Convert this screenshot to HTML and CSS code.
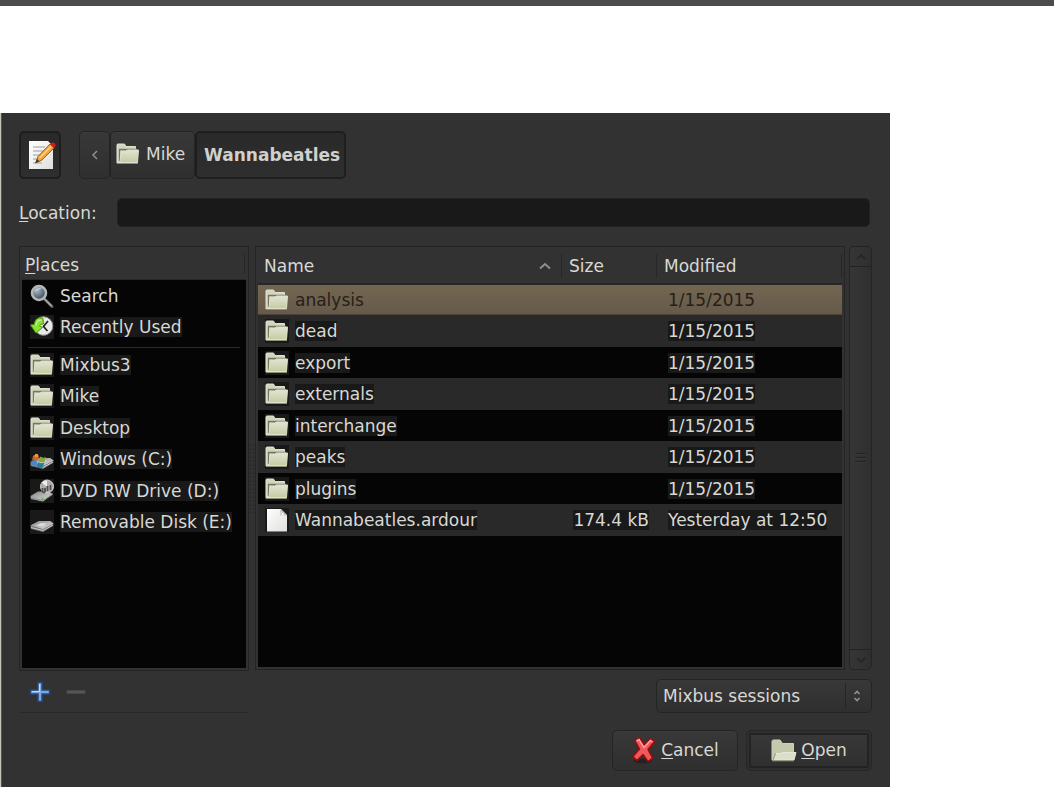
FILE: index.html
```html
<!DOCTYPE html>
<html lang="en">
<head>
    <meta charset="UTF-8">
    <meta name="viewport" content="width=device-width, initial-scale=1.0">
    <title>Open Session</title>
    <link rel="stylesheet" href="styles.css">
</head>
<body>
<!-- Shared icons -->
<svg class="sprite" width="0" height="0" aria-hidden="true">
    <defs>
        <linearGradient id="folder-front" x1="0" y1="0" x2="0" y2="1">
            <stop offset="0" stop-color="#e2e4d3"/>
            <stop offset="1" stop-color="#c6cba3"/>
        </linearGradient>
        <linearGradient id="paper" x1="0" y1="0" x2="1" y2="1">
            <stop offset="0" stop-color="#ffffff"/>
            <stop offset="1" stop-color="#dededc"/>
        </linearGradient>
        <linearGradient id="drive-top" x1="0" y1="0" x2="1" y2="1">
            <stop offset="0" stop-color="#858585"/>
            <stop offset="1" stop-color="#e4e4e4"/>
        </linearGradient>
        <radialGradient id="glass" cx="0.35" cy="0.3" r="0.8">
            <stop offset="0" stop-color="#a9bac8"/>
            <stop offset="1" stop-color="#2c3a48"/>
        </radialGradient>
    </defs>
    <symbol id="icon-folder" viewBox="0 0 24 24">
        <path d="M1 21V3Q1 2 2 2H8.500L10 4.500H19.500V8H5L3.500 21Z" fill="#d3d6be" stroke="#dfe1cf" stroke-width="1"/>
        <path d="M3.600 19V7.500H21" fill="none" stroke="#74765f" stroke-width="1.500"/>
        <path d="M5 9H10L11.500 8H22.500L21.500 20.500H4Z" fill="url(#folder-front)" stroke="#dfe1cf" stroke-width="1"/>
        <path d="M1 21.500H22" stroke="#8d9075"/>
    </symbol>
    <symbol id="icon-folder-open" viewBox="0 0 26 24">
        <path d="M1 22V3.500Q1 2 2.500 2H9L11.500 5.500H22.500V22Z" fill="#c5c9ac" stroke="#cfd2ba"/>
        <path d="M2 22L5 15.500H10L11.500 14.500H25L23 22Z" fill="#dcdecb" stroke="#e6e8d9"/>
        <path d="M2 22L4.500 15.500M1 22.800H23" fill="none" stroke="#8d9075"/>
    </symbol>
    <symbol id="icon-file" viewBox="0 0 24 24">
        <path d="M2 1H16L22 7V23.500H2Z" fill="url(#paper)"/>
        <path d="M15.500 1V7.500H22Z" fill="#b4b4b2"/>
        <path d="M16.500 3.500L20 7.500H16.500Z" fill="#f5f5f5"/>
    </symbol>
    <symbol id="icon-search" viewBox="0 0 24 24">
        <path d="M14.500 15L22 22.500" stroke="#666" stroke-width="3" stroke-linecap="round"/>
        <path d="M14.500 15L21.500 22" stroke="#b0b0b0" stroke-width="1.200"/>
        <circle cx="9" cy="9" r="7" fill="url(#glass)" stroke="#b4b6b8" stroke-width="2.600"/>
        <path d="M4.500 8A5 5 0 0 1 12 4.800Q8 5 4.500 8Z" fill="#dfe6ec" opacity=".6"/>
    </symbol>
    <symbol id="icon-recent" viewBox="0 0 24 24">
        <circle cx="13.500" cy="11" r="9.300" fill="#e9e9e7" stroke="#8a8a88"/>
        <path d="M18 6L13.500 11.500L17.500 16" fill="none" stroke="#222" stroke-width="1.700"/>
        <path d="M13 3.500Q5 1 4.500 9.500L0.500 10L6 18L12.500 12.500L9.500 11Q10 8.500 13.500 9Z" fill="#8ae234" stroke="#4e9a06"/>
        <path d="M6 10.500Q6 5 11.500 4.800" fill="none" stroke="#c4f58d" stroke-width="1.300"/>
    </symbol>
    <symbol id="icon-drive" viewBox="0 0 24 24">
        <path d="M0.500 15.500L9 11H20L23.500 13.500L23 16L13 22L1 19Z" fill="#777"/>
        <path d="M0.500 15.500L9 11H20L23.500 13.500L13 19Z" fill="url(#drive-top)"/>
        <path d="M6 15.500L11 13L17 13.500L12.500 16.500Z" fill="#eee" opacity=".7"/>
        <path d="M1 17.500L13 20.500L23 15" fill="none" stroke="#ccc"/>
    </symbol>
    <symbol id="icon-windows" viewBox="0 0 24 24">
        <use href="#icon-drive"/>
        <path d="M3 9Q6.500 6.500 9 9.500L7.500 14Q4.500 12 2 13.500Z" fill="#dd6127"/>
        <path d="M10 9.500Q13 11.500 16 10L14.500 15Q11.500 16 8.500 14.500Z" fill="#86a83a"/>
        <path d="M1.300 14Q4.500 12.500 7.300 14.500L6 20Q3 17.500 0.500 18.500Z" fill="#4488c4"/>
        <path d="M8 15Q11 17 14.300 15.500L13 20.500Q9.500 22 6.500 20Z" fill="#2c7c9c"/>
        <circle cx="6.500" cy="8.500" r="1.800" fill="#f0a030"/>
    </symbol>
    <symbol id="icon-dvd" viewBox="0 0 24 24">
        <path d="M0.500 17L8 12.500H18L23 15L13 22.500L1 20Z" fill="url(#drive-top)"/>
        <path d="M1 19L13 21.500L22.500 15.500" fill="none" stroke="#888"/>
        <circle cx="17" cy="7.500" r="6.500" fill="#adadad" stroke="#d5d5d5"/>
        <path d="M17 7.500L11.500 4Q13 1.500 17 1.500Z" fill="#eee"/>
        <path d="M12.500 9V12.500Q14 14.500 15 12.500V9M17.500 7V12M20.500 6V11" stroke="#505050" stroke-width="1.800" fill="none"/>
        <path d="M12.500 18.500V21" stroke="#53bd3c" stroke-width="1.500"/>
        <circle cx="12" cy="5" r="1" fill="#6fce54"/>
    </symbol>
</svg>

<header class="top-strip"></header>

<main class="dialog">
    <div class="path-bar">
        <button type="button" class="btn btn-edit pressed" aria-label="Type a file name">
            <svg width="28" height="30" viewBox="0 0 28 30" aria-hidden="true">
                <path d="M1 1H20L25 6V29H1Z" fill="url(#paper)"/>
                <path d="M5 7H17M5 11H15M5 15H13M5 19H11M5 23H14" stroke="#bcbcbc" stroke-width="1.300"/>
                <path d="M7.500 23L10 16.500L22 4L26 8L14 20Z" fill="#f0a63a" stroke="#9b6115"/>
                <path d="M11.500 18L23 6.500" stroke="#ffd48a" stroke-width="1.500"/>
                <path d="M7.500 23L9 19L11.500 21.500Z" fill="#3a3a3a"/>
                <path d="M22 4L23.500 2.800Q25.500 2 27 3.800Q28.200 5.300 27 7L26 8Z" fill="#d61a1a"/>
            </svg>
        </button>
        <nav class="crumbs" aria-label="Folder path">
            <button type="button" class="btn crumb crumb-back" aria-label="Back">
                <svg width="8" height="12" viewBox="0 0 8 12" aria-hidden="true"><path d="M6 2L2 6L6 10" fill="none" stroke="#8f8f8b" stroke-width="1.500"/></svg>
            </button>
            <button type="button" class="btn crumb">
                <svg class="icon" aria-hidden="true"><use href="#icon-folder"/></svg>
                <span>Mike</span>
            </button>
            <button type="button" class="btn crumb crumb-current pressed">Wannabeatles</button>
        </nav>
    </div>

    <div class="location">
        <label for="location"><u>L</u>ocation:</label>
        <input type="text" id="location" name="location">
    </div>

    <div class="panes">
        <section class="places">
            <div class="panel">
                <h2 class="places-title"><span><u>P</u>laces</span></h2>
                <ul class="places-list">
                    <li><a href="#"><svg class="icon" aria-hidden="true"><use href="#icon-search"/></svg><span>Search</span></a></li>
                    <li><a href="#"><svg class="icon shade" aria-hidden="true"><use href="#icon-recent"/></svg><span class="shade">Recently Used</span></a></li>
                </ul>
                <hr>
                <ul class="places-list">
                    <li><a href="#"><svg class="icon shade" aria-hidden="true"><use href="#icon-folder"/></svg><span class="shade">Mixbus3</span></a></li>
                    <li><a href="#"><svg class="icon shade" aria-hidden="true"><use href="#icon-folder"/></svg><span class="shade">Mike</span></a></li>
                    <li><a href="#"><svg class="icon shade" aria-hidden="true"><use href="#icon-folder"/></svg><span class="shade">Desktop</span></a></li>
                    <li><a href="#"><svg class="icon shade" aria-hidden="true"><use href="#icon-windows"/></svg><span class="shade">Windows (C:)</span></a></li>
                    <li><a href="#"><svg class="icon shade" aria-hidden="true"><use href="#icon-dvd"/></svg><span class="shade">DVD RW Drive (D:)</span></a></li>
                    <li><a href="#"><svg class="icon shade" aria-hidden="true"><use href="#icon-drive"/></svg><span class="shade">Removable Disk (E:)</span></a></li>
                </ul>
            </div>
            <div class="places-tools">
                <button type="button" aria-label="Add">
                    <svg width="22" height="22" viewBox="0 0 22 22" aria-hidden="true">
                        <path d="M9 1.500H13V9H20.500V13H13V20.500H9V13H1.500V9H9Z" fill="#7fa8d8" stroke="#204a87" stroke-width="1.500"/>
                        <path d="M10.500 3V10.500H3" fill="none" stroke="#c3d8f0" stroke-width="1.200"/>
                    </svg>
                </button>
                <button type="button" aria-label="Remove" disabled>
                    <svg width="22" height="22" viewBox="0 0 22 22" aria-hidden="true"><path d="M2 9.500H20V12.500H2Z" fill="#565656" stroke="#474747"/></svg>
                </button>
            </div>
        </section>

        <div class="grip"></div>

        <section class="files">
            <div class="panel">
                <table>
                    <colgroup>
                        <col>
                        <col class="col-size">
                        <col class="col-modified">
                    </colgroup>
                    <thead>
                        <tr>
                            <th scope="col"><div class="head">Name
                                <svg width="12" height="8" viewBox="0 0 12 8" aria-hidden="true"><path d="M1 6.500L6 2L11 6.500" fill="none" stroke="#8f8f8b" stroke-width="2"/></svg>
                            </div></th>
                            <th scope="col"><div class="head">Size</div></th>
                            <th scope="col"><div class="head">Modified</div></th>
                        </tr>
                    </thead>
                    <tbody>
                        <tr class="selected">
                            <td><div class="file"><svg class="icon" aria-hidden="true"><use href="#icon-folder"/></svg><span>analysis</span></div></td>
                            <td></td>
                            <td><span>1/15/2015</span></td>
                        </tr>
                        <tr>
                            <td><div class="file"><svg class="icon shade" aria-hidden="true"><use href="#icon-folder"/></svg><span class="shade">dead</span></div></td>
                            <td></td>
                            <td><span class="shade">1/15/2015</span></td>
                        </tr>
                        <tr>
                            <td><div class="file"><svg class="icon shade" aria-hidden="true"><use href="#icon-folder"/></svg><span class="shade">export</span></div></td>
                            <td></td>
                            <td><span class="shade">1/15/2015</span></td>
                        </tr>
                        <tr>
                            <td><div class="file"><svg class="icon shade" aria-hidden="true"><use href="#icon-folder"/></svg><span class="shade">externals</span></div></td>
                            <td></td>
                            <td><span class="shade">1/15/2015</span></td>
                        </tr>
                        <tr>
                            <td><div class="file"><svg class="icon shade" aria-hidden="true"><use href="#icon-folder"/></svg><span class="shade">interchange</span></div></td>
                            <td></td>
                            <td><span class="shade">1/15/2015</span></td>
                        </tr>
                        <tr>
                            <td><div class="file"><svg class="icon shade" aria-hidden="true"><use href="#icon-folder"/></svg><span class="shade">peaks</span></div></td>
                            <td></td>
                            <td><span class="shade">1/15/2015</span></td>
                        </tr>
                        <tr>
                            <td><div class="file"><svg class="icon shade" aria-hidden="true"><use href="#icon-folder"/></svg><span class="shade">plugins</span></div></td>
                            <td></td>
                            <td><span class="shade">1/15/2015</span></td>
                        </tr>
                        <tr>
                            <td><div class="file"><svg class="icon shade" aria-hidden="true"><use href="#icon-file"/></svg><span class="shade">Wannabeatles.ardour</span></div></td>
                            <td><span class="shade">174.4 kB</span></td>
                            <td><span class="shade">Yesterday at 12:50</span></td>
                        </tr>
                    </tbody>
                </table>
            </div>
            <div class="scrollbar">
                <button type="button" aria-label="Scroll up">
                    <svg width="10" height="6" viewBox="0 0 10 6" aria-hidden="true"><path d="M1 5L5 1L9 5" fill="none" stroke="#222" stroke-width="1.500"/></svg>
                </button>
                <div class="thumb"></div>
                <button type="button" aria-label="Scroll down">
                    <svg width="10" height="6" viewBox="0 0 10 6" aria-hidden="true"><path d="M1 1L5 5L9 1" fill="none" stroke="#222" stroke-width="1.500"/></svg>
                </button>
            </div>
            <div class="filter">
                <select aria-label="File type">
                    <option>Mixbus sessions</option>
                </select>
                <svg class="filter-arrows" width="28" height="26" viewBox="0 0 28 26" aria-hidden="true">
                    <path d="M1.500 0V26" stroke="#252525"/>
                    <path d="M10.500 11L13 8.500L15.500 11M10.500 15L13 17.500L15.500 15" fill="none" stroke="#92928e" stroke-width="1.600"/>
                </svg>
            </div>
        </section>
    </div>

    <div class="actions">
        <button type="button" class="btn">
            <svg width="26" height="28" viewBox="0 0 26 28" aria-hidden="true">
                <ellipse cx="12" cy="25" rx="9" ry="2.500" fill="#222"/>
                <path d="M4 4.500L8.500 1.500L13 9L19 2.500L23.500 5.500L17 13.500L21.500 22L17 25.500L12 18.500L6 24.500L2 20.500L8.500 13Z" fill="#f0595a" stroke="#a40808" stroke-width="1.500" stroke-linejoin="round"/>
                <path d="M5.500 5L8 3.500L13 11.500L19.500 4.500L21.500 6" fill="none" stroke="#ff9c9c" stroke-width="1.500"/>
            </svg>
            <span><u>C</u>ancel</span>
        </button>
        <button type="submit" class="btn btn-default">
            <svg width="26" height="24" aria-hidden="true"><use href="#icon-folder-open"/></svg>
            <span><u>O</u>pen</span>
        </button>
    </div>
</main>
</body>
</html>
```
FILE: styles.css
```css
/* Page */
* {
    box-sizing: border-box;
}

body {
    margin: 0;
    min-height: 100vh;
    display: flex;
    flex-direction: column;
    background-color: #ffffff;
    color: #d8d8d4;
    font-family: "DejaVu Sans", sans-serif;
    font-size: 17px;
    line-height: 20px;
}

button, input, select {
    font: inherit;
    color: inherit;
    margin: 0;
}

u {
    text-decoration: underline;
    text-underline-offset: 2px;
}

.sprite {
    position: absolute;
}

.top-strip {
    height: 6px;
    background-color: #4d4b4c;
}

/* Dialog */
.dialog {
    flex: 1;
    display: flex;
    flex-direction: column;
    margin: 107px 164px 0 0;
    padding: 18px 18px 16px 17px;
    background-color: #323232;
    border-left: 1px solid #c8c5b8;
    box-shadow: inset 1px 0 #555550;
}

/* Buttons */
.btn {
    display: flex;
    align-items: center;
    justify-content: center;
    padding: 0 0 2px;
    border: 1px solid #242424;
    border-radius: 5px;
    background: linear-gradient(#383838, #2f2f2f);
    box-shadow: inset 0 1px #3b3b3b;
}

.btn.pressed {
    border: 2px solid #1e1e1e;
    background: linear-gradient(#292929, #2f2f2f);
    box-shadow: none;
}

.icon {
    width: 24px;
    height: 24px;
    flex: none;
}

/* Path bar */
.path-bar {
    display: flex;
    gap: 18px;
    height: 48px;
    padding-left: 1px;
}

.path-bar .btn-edit {
    width: 42px;
    padding: 0 0 0 4px;
}

.crumbs {
    display: flex;
}

.crumb {
    gap: 6px;
    padding: 0 9px 2px 5px;
}

.crumb-back {
    width: 31px;
    padding: 0;
}

.crumb-current {
    padding: 0 4px 0 7px;
    font-weight: bold;
    color: #d0d0cc;
}

/* Location */
.location {
    display: flex;
    align-items: center;
    gap: 20px;
    margin-top: 19px;
    padding-left: 1px;
}

.location input {
    flex: 1;
    min-width: 0;
    height: 29px;
    margin-right: 2px;
    padding: 0 8px;
    border: 1px solid #222222;
    border-radius: 5px;
    background-color: #191919;
}

/* Panes */
.panes {
    flex: 1;
    display: flex;
    margin-top: 19px;
    padding-left: 1px;
}

.panel {
    border: 1px solid #242424;
    padding: 0 2px 2px;
    background: #050505 content-box;
    box-shadow: inset 0 0 0 2px #323232;
}

.shade {
    background-color: #191919;
}

/* Places */
.places {
    width: 230px;
    display: flex;
    flex-direction: column;
}

.places .panel {
    flex: 1;
}

.places-title {
    height: 33px;
    margin: 0;
    padding: 6px 0 0 3px;
    background-color: #323232;
    border-bottom: 1px solid #282828;
    font-size: 17px;
    font-weight: normal;
    line-height: 24px;
}

.places-title span {
    display: block;
    margin-right: 1px;
    border-right: 1px solid #272727;
    height: 21px;
}

.places-list {
    margin: 0;
    padding: 0;
    list-style: none;
}

.places-list a {
    display: flex;
    align-items: center;
    gap: 6px;
    height: 31px;
    padding-left: 8px;
    color: inherit;
    text-decoration: none;
    white-space: nowrap;
}

.places-list li:nth-child(even) a {
    height: 32px;
}

.places hr {
    height: 1px;
    margin: 4px 6px 1px;
    border: 0;
    background-color: #2a2a2a;
}

.places-tools {
    display: flex;
    align-items: center;
    gap: 14px;
    height: 42px;
    padding-left: 10px;
    border-bottom: 1px solid #282828;
}

.places-tools button {
    display: flex;
    padding: 0;
    border: 0;
    background: none;
}

/* Handle between the panes */
.grip {
    width: 6px;
    height: 70px;
    margin-top: 197px;
    background: radial-gradient(#252525 1px, transparent 1px) 0 0 / 3px 4px;
}

/* Files */
.files {
    flex: 1;
    min-width: 0;
    display: grid;
    grid-template-columns: 1fr 23px;
    grid-template-rows: 1fr 34px;
    column-gap: 4px;
    row-gap: 9px;
}

.files table {
    width: 100%;
    table-layout: fixed;
    border-collapse: collapse;
}

.col-size {
    width: 95px;
}

.col-modified {
    width: 185px;
}

.files th {
    height: 37px;
    padding: 1px 0 0;
    background-color: #323232;
    border-bottom: 2px solid #262626;
    font-weight: normal;
    text-align: left;
}

.head {
    display: flex;
    align-items: center;
    justify-content: space-between;
    height: 24px;
    padding: 0 10px 0 7px;
    border-right: 1px solid #272727;
}

.files th:first-child .head {
    padding-left: 6px;
}

.files td {
    height: 31px;
    padding: 0 11px;
    white-space: nowrap;
}

.files td:first-child {
    padding: 0 7px;
}

.files td:nth-child(2) {
    padding: 0 8px 0 0;
    text-align: right;
}

.files tbody tr:nth-child(even) {
    background-color: #292929;
}

.files tbody tr:nth-child(even) td {
    height: 32px;
}

.files tbody .selected {
    background: linear-gradient(#746751, #65594a);
    color: #262019;
    box-shadow: inset 0 -1px #4b4238;
}

.file {
    display: flex;
    align-items: center;
    gap: 6px;
}

/* Scrollbar */
.scrollbar {
    display: flex;
    flex-direction: column;
    border: 1px solid #242424;
    border-radius: 5px;
    background: linear-gradient(90deg, #363636, #2f2f2f);
}

.scrollbar button {
    display: flex;
    align-items: center;
    justify-content: center;
    height: 19px;
    padding: 0;
    border: 0;
    background: none;
}

.thumb {
    flex: 1;
    display: flex;
    align-items: center;
    justify-content: center;
    border: 1px solid #222222;
    border-width: 1px 0;
}

.thumb::before {
    content: "";
    width: 11px;
    height: 10px;
    background: repeating-linear-gradient(#222222 0 1px, #393939 1px 2px, transparent 2px 4px);
}

/* File type filter */
.filter {
    grid-column: 1 / -1;
    justify-self: end;
    position: relative;
    width: 216px;
}

.filter select {
    appearance: none;
    width: 100%;
    height: 34px;
    padding: 0 32px 0 6px;
    border: 1px solid #242424;
    border-radius: 5px;
    background: linear-gradient(#383838, #2f2f2f);
}

.filter-arrows {
    position: absolute;
    top: 4px;
    right: 0;
    pointer-events: none;
}

/* Bottom buttons */
.actions {
    display: flex;
    justify-content: flex-end;
    gap: 8px;
    margin-top: 17px;
}

.actions .btn {
    width: 126px;
    height: 41px;
    gap: 4px;
}

.actions .btn-default {
    border-color: #262626;
    box-shadow: inset 0 0 0 2px #2f2f2f, inset 0 0 0 4px #232323;
}
```
